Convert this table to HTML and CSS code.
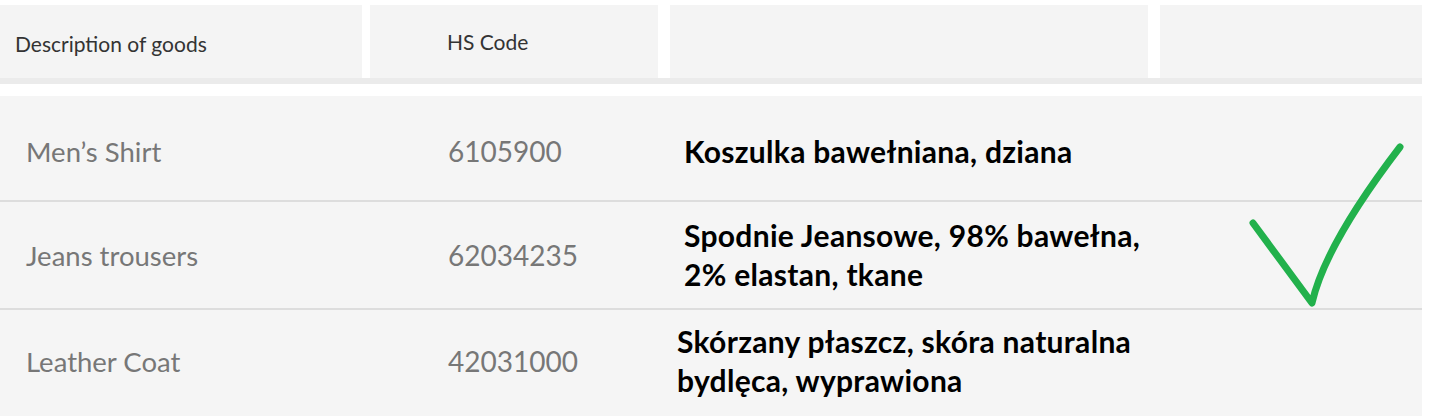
FILE: index.html
```html
<!DOCTYPE html>
<html lang="en">
<head>
<meta charset="utf-8">
<title>Goods</title>
<link rel="stylesheet" href="styles.css">
</head>
<body>
<div class="page">
  <div class="thead">
    <div class="hrow">
      <div class="hcell c1">Description of goods</div>
      <div class="hcell c2">HS Code</div>
      <div class="hcell c3"></div>
      <div class="hcell c4"></div>
    </div>
    <div class="hband"></div>
  </div>
  <div class="tbody">
    <div class="row first">
      <div class="cell desc">Men’s Shirt</div>
      <div class="cell code">6105900</div>
      <div class="cell pl">Koszulka bawełniana, dziana</div>
    </div>
    <div class="row">
      <div class="cell desc">Jeans trousers</div>
      <div class="cell code">62034235</div>
      <div class="cell pl">Spodnie Jeansowe, 98% bawełna,<br>2% elastan, tkane</div>
    </div>
    <div class="row last">
      <div class="cell desc">Leather Coat</div>
      <div class="cell code">42031000</div>
      <div class="cell pl pl3">Skórzany płaszcz, skóra naturalna<br>bydlęca, wyprawiona</div>
    </div>
    <svg class="check" width="175" height="180" viewBox="0 0 175 180" aria-hidden="true">
      <path d="M13 88 L72 168 Q85 110 160 12" fill="none" stroke="#22b14c" stroke-width="7" stroke-linecap="round" stroke-linejoin="round"/>
    </svg>
  </div>
</div>
</body>
</html>
```

FILE: styles.css
```css
html, body {
  margin: 0;
  padding: 0;
  background: #ffffff;
}

.page {
  width: 1422px;
  padding-top: 5px;
  font-family: Lato, "Open Sans", sans-serif;
}

.thead {
  display: flex;
  flex-direction: column;
}

.hrow {
  display: flex;
  height: 73px;
}

.hcell {
  background: #f4f4f4;
  display: flex;
  align-items: center;
  font-size: 21px;
  color: #333333;
}

.c1 { width: 362px; padding-left: 15px; box-sizing: border-box; padding-top: 3px; }
.c2 { width: 288px; margin-left: 8px; padding-left: 77px; box-sizing: border-box; }
.c3 { width: 478px; margin-left: 12px; }
.c4 { width: 262px; margin-left: 12px; }

.hband {
  height: 6px;
  background: #ebebeb;
}

.tbody {
  position: relative;
  margin-top: 12px;
  background: #f5f5f5;
  height: 320px;
}

.row {
  display: grid;
  grid-template-columns: 370px 300px 1fr;
  align-items: center;
  height: 106px;
  border-bottom: 2px solid #dddddd;
}

.row.first {
  height: 106px;
  padding-top: 6px;
  box-sizing: border-box;
}

.row.last {
  border-bottom: none;
  height: 106px;
}

.cell.desc {
  padding-left: 26px;
  font-size: 27.5px;
  color: #777777;
}

.cell.code {
  padding-left: 78px;
  font-size: 28px;
  color: #777777;
}

.row.last .cell.desc,
.row.last .cell.code {
  padding-bottom: 4px;
}

.cell.pl {
  padding-left: 14px;
  font-weight: 700;
  font-size: 30px;
  letter-spacing: 0.3px;
  line-height: 39px;
  color: #000000;
}

.cell.pl3 {
  padding-left: 7px;
  padding-bottom: 4px;
}

.check {
  position: absolute;
  left: 1240px;
  top: 39px;
}
```
